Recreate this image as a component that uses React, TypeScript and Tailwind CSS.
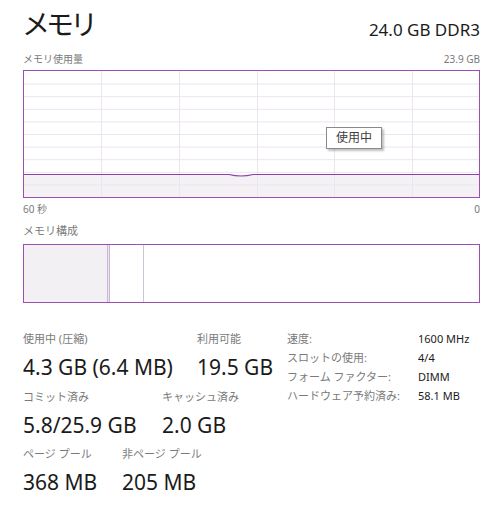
import React from 'react';

const font = { fontFamily: '"Noto Sans", "Noto Sans CJK JP", sans-serif' };

// usage graph: fixed grid that has scrolled a bit, flat usage line
function UsageGraph() {
  const w = 455;
  const h = 126;
  const hLines = Array.from({ length: 9 }, (_, i) => ((i + 1) * h) / 10);
  const vLines = [77, 155, 233, 310, 388];
  const lineY = 103.5;

  return (
    <div className="relative h-[128px] border border-[#9b4fb3]">
      <svg width={w} height={h} className="block">
        <rect x={0} y={lineY} width={w} height={h - lineY} fill="#f4f1f5" />
        {hLines.map((y) => (
          <line key={y} x1={0} x2={w} y1={y + 0.5} y2={y + 0.5} stroke="#ece4ef" strokeWidth={1} />
        ))}
        {vLines.map((x) => (
          <line key={x} x1={x + 0.5} x2={x + 0.5} y1={0} y2={h} stroke="#ece4ef" strokeWidth={1} />
        ))}
        <path
          d={`M0 ${lineY} L205 ${lineY} Q217 ${lineY + 3} 229 ${lineY} L${w} ${lineY}`}
          fill="none"
          stroke="#8f3fa8"
          strokeWidth={1.2}
        />
      </svg>
      {/* tooltip */}
      <div className="absolute left-[302px] top-[56px] h-[22px] w-[56px] border border-[#8a8a8a] bg-white text-[12px] leading-[20px] text-[#404040] text-center shadow-[2px_2px_2px_rgba(0,0,0,0.25)]">
        使用中
      </div>
    </div>
  );
}

function Stat({ label, value, width }: { label: string; value: string; width?: string }) {
  return (
    <div className={width}>
      <div className="text-[11px] leading-[14px] text-[#7a7a7a]">{label}</div>
      <div className="mt-[8px] text-[21px] leading-[26px] text-[#1b1b1b] whitespace-nowrap">{value}</div>
    </div>
  );
}

export default function App() {
  const specs = [
    ['速度:', '1600 MHz'],
    ['スロットの使用:', '4/4'],
    ['フォーム ファクター:', 'DIMM'],
    ['ハードウェア予約済み:', '58.1 MB']
  ];

  return (
    <div className="w-[493px] h-[512px] bg-white pl-[23px] pr-[13px] pt-[4px]" style={font}>
      {/* Header */}
      <div className="flex items-end justify-between">
        <h1 className="text-[28px] leading-[40px] tracking-[-4px] text-[#1b1b1b] -ml-[1px]">メモリ</h1>
        <div className="text-[17px] leading-[24px] text-[#1b1b1b] mb-[2px]">24.0 GB DDR3</div>
      </div>

      <div className="mt-[8px] flex justify-between text-[10px] leading-[14px] text-[#7a7a7a]">
        <span>メモリ使用量</span>
        <span>23.9 GB</span>
      </div>

      <div className="mt-[4px]">
        <UsageGraph />
      </div>

      <div className="mt-[4px] flex justify-between text-[10px] leading-[14px] text-[#7a7a7a]">
        <span>60 秒</span>
        <span>0</span>
      </div>

      <div className="mt-[8px] text-[11px] leading-[14px] text-[#7a7a7a]">メモリ構成</div>

      {/* Composition */}
      <div className="mt-[6px] flex h-[59px] border border-[#9b4fb3]">
        <div className="w-[83px] bg-[#f2f0f3]" />
        <div className="w-[3px] border-x border-[#cbb6d6] bg-[#ebe4ef]" />
        <div className="w-[34px] border-r border-[#cfc3d6]" />
        <div className="flex-1" />
      </div>

      {/* Stats */}
      <div className="mt-[29px] flex">
        <div className="w-[264px]">
          <div className="flex">
            <Stat label="使用中 (圧縮)" value="4.3 GB (6.4 MB)" width="w-[174px]" />
            <Stat label="利用可能" value="19.5 GB" />
          </div>
          <div className="mt-[10px] flex">
            <Stat label="コミット済み" value="5.8/25.9 GB" width="w-[139px]" />
            <Stat label="キャッシュ済み" value="2.0 GB" />
          </div>
          <div className="mt-[9px] flex">
            <Stat label="ページ プール" value="368 MB" width="w-[99px]" />
            <Stat label="非ページ プール" value="205 MB" />
          </div>
        </div>

        <div className="flex flex-col gap-[5px] text-[11px] leading-[14px]">
          {specs.map(([k, v]) => (
            <div key={k} className="flex">
              <span className="w-[131px] text-[#7a7a7a] whitespace-nowrap">{k}</span>
              <span className="text-[#1b1b1b] whitespace-nowrap">{v}</span>
            </div>
          ))}
        </div>
      </div>
    </div>
  );
}
